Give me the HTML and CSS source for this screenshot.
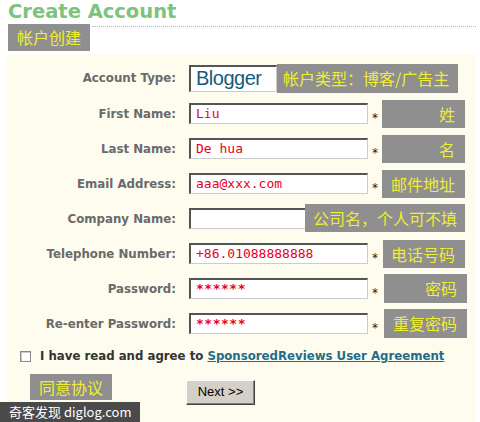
FILE: index.html
```html
<!DOCTYPE html>
<html lang="zh">
<head>
<meta charset="utf-8">
<title>Create Account</title>
<link rel="stylesheet" href="styles.css">
</head>
<body>
<div class="page">
  <h1 class="title">Create Account</h1>
  <div class="subrow">
    <span class="tag tag-head">帐户创建</span>
    <span class="dots"></span>
  </div>
  <div class="form">
    <div class="row row-type">
      <label class="lbl">Account Type:</label>
      <span class="select">Blogger</span>
      <span class="note note-type">帐户类型：博客/广告主</span>
    </div>
    <div class="row">
      <label class="lbl">First Name:</label>
      <span class="input">Liu</span>
      <span class="star">*</span>
      <span class="note">姓</span>
    </div>
    <div class="row">
      <label class="lbl">Last Name:</label>
      <span class="input">De hua</span>
      <span class="star">*</span>
      <span class="note">名</span>
    </div>
    <div class="row">
      <label class="lbl">Email Address:</label>
      <span class="input">aaa@xxx.com</span>
      <span class="star">*</span>
      <span class="note">邮件地址</span>
    </div>
    <div class="row">
      <label class="lbl">Company Name:</label>
      <span class="input"></span>
      <span class="note note-company">公司名，个人可不填</span>
    </div>
    <div class="row">
      <label class="lbl">Telephone Number:</label>
      <span class="input">+86.01088888888</span>
      <span class="star">*</span>
      <span class="note note-tel">电话号码</span>
    </div>
    <div class="row">
      <label class="lbl">Password:</label>
      <span class="input input-pw">******</span>
      <span class="star">*</span>
      <span class="note note-pw">密码</span>
    </div>
    <div class="row">
      <label class="lbl">Re-enter Password:</label>
      <span class="input input-pw">******</span>
      <span class="star">*</span>
      <span class="note note-pw">重复密码</span>
    </div>
    <div class="agree">
      <span class="checkbox"></span>
      <span class="agree-text">I have read and agree to <a class="link" href="#">SponsoredReviews User Agreement</a></span>
    </div>
    <div class="bottom">
      <span class="tag tag-agree">同意协议</span>
      <span class="button">Next &gt;&gt;</span>
    </div>
  </div>
</div>
<div class="watermark">奇客发现 diglog.com</div>
</body>
</html>
```
FILE: styles.css
```css
* { box-sizing: border-box; }
html, body { margin: 0; padding: 0; }
body {
  width: 480px;
  height: 422px;
  overflow: hidden;
  position: relative;
  background: #fff;
  font-family: "DejaVu Sans", Verdana, sans-serif;
}
.title {
  margin: 0;
  padding: 1px 0 0 8px;
  height: 24px;
  font-size: 19.5px;
  line-height: 22px;
  font-weight: bold;
  color: #7cc37c;
}
.subrow {
  display: flex;
  align-items: flex-start;
}
.tag {
  display: block;
  background: #8f8f8f;
  color: #eeee30;
  font-family: "Noto Sans CJK SC", sans-serif;
  font-size: 16px;
  text-align: center;
}
.tag-head {
  margin-left: 8px;
  width: 82px;
  height: 27px;
  line-height: 27px;
}
.dots {
  flex: 1;
  margin: 2px 4px 0 2px;
  border-top: 1px dotted #b8b8b8;
}
.form {
  margin: 3px 0 0 6px;
  width: 470px;
  height: 368px;
  background: #fdfcef;
  padding-top: 6px;
}
.row {
  display: flex;
  align-items: center;
  height: 35px;
  position: relative;
}
.row-type { height: 36px; }
.lbl {
  width: 170px;
  margin-right: 13px;
  text-align: right;
  font-size: 11.8px;
  font-weight: bold;
  color: #6a6a6a;
}
.select {
  width: 88px;
  height: 27px;
  background: #fff;
  border-style: solid;
  border-width: 2px 1px 1px 2px;
  border-color: #555 #ccc #ccc #555;
  padding-left: 5px;
  font-family: "Liberation Sans", Arial, sans-serif;
  font-size: 20px;
  letter-spacing: -0.5px;
  line-height: 23px;
  color: #145c7c;
}
.input {
  width: 179px;
  height: 21px;
  background: #fff;
  border-style: solid;
  border-width: 2px 1px 1px 2px;
  border-color: #555 #ccc #ccc #555;
  padding-left: 5px;
  font-family: "DejaVu Sans Mono", monospace;
  font-size: 13px;
  line-height: 18px;
  color: #e8001c;
}
.input-pw {
  font-weight: bold;
  letter-spacing: 0.5px;
}
.star {
  width: 14px;
  padding-top: 8px;
  text-align: center;
  font-size: 12px;
  color: #222;
}
.note {
  display: block;
  width: 83px;
  height: 28px;
  line-height: 28px;
  background: #8f8f8f;
  color: #eeee30;
  font-family: "Noto Sans CJK SC", sans-serif;
  font-size: 16px;
  text-align: right;
  padding-right: 10px;
}
.note-type {
  width: 181px;
  height: 29px;
  text-align: left;
  padding-left: 6px;
  padding-right: 0;
}
.note-company {
  position: absolute;
  left: 299px;
  top: 3px;
  width: 160px;
  padding-right: 8px;
}
.note-tel { margin-left: 1px; width: 82px; }
.note-pw { margin-left: 2px; height: 29px; }
.agree {
  display: flex;
  align-items: center;
  height: 30px;
  padding-left: 14px;
}
.checkbox {
  width: 11px;
  height: 11px;
  background: #fff;
  border: 1px solid #8a8a8a;
  box-shadow: inset 1px 1px 0 #c8c8c8;
}
.agree-text {
  margin-left: 9px;
  font-size: 11.75px;
  font-weight: bold;
  color: #333;
}
.link {
  color: #1f6d8c;
  text-decoration: underline;
}
.bottom {
  display: flex;
  align-items: flex-start;
  margin-top: 3px;
  padding-left: 24px;
}
.tag-agree {
  width: 82px;
  height: 26px;
  line-height: 26px;
}
.button {
  display: block;
  margin: 6px 0 0 74px;
  width: 69px;
  height: 25px;
  background: #d4d0c8;
  border-style: solid;
  border-width: 1px;
  border-color: #fff #404040 #404040 #fff;
  box-shadow: inset -1px -1px 0 #808080;
  font-family: "Liberation Sans", Arial, sans-serif;
  font-size: 13px;
  line-height: 22px;
  text-align: center;
  color: #000;
}
.watermark {
  position: absolute;
  left: 0;
  bottom: 0;
  width: 140px;
  height: 20px;
  background: #4a4a4a;
  color: #fff;
  font-family: "Noto Sans CJK SC", sans-serif;
  font-size: 13px;
  line-height: 20px;
  padding-left: 9px;
  white-space: nowrap;
}
```
